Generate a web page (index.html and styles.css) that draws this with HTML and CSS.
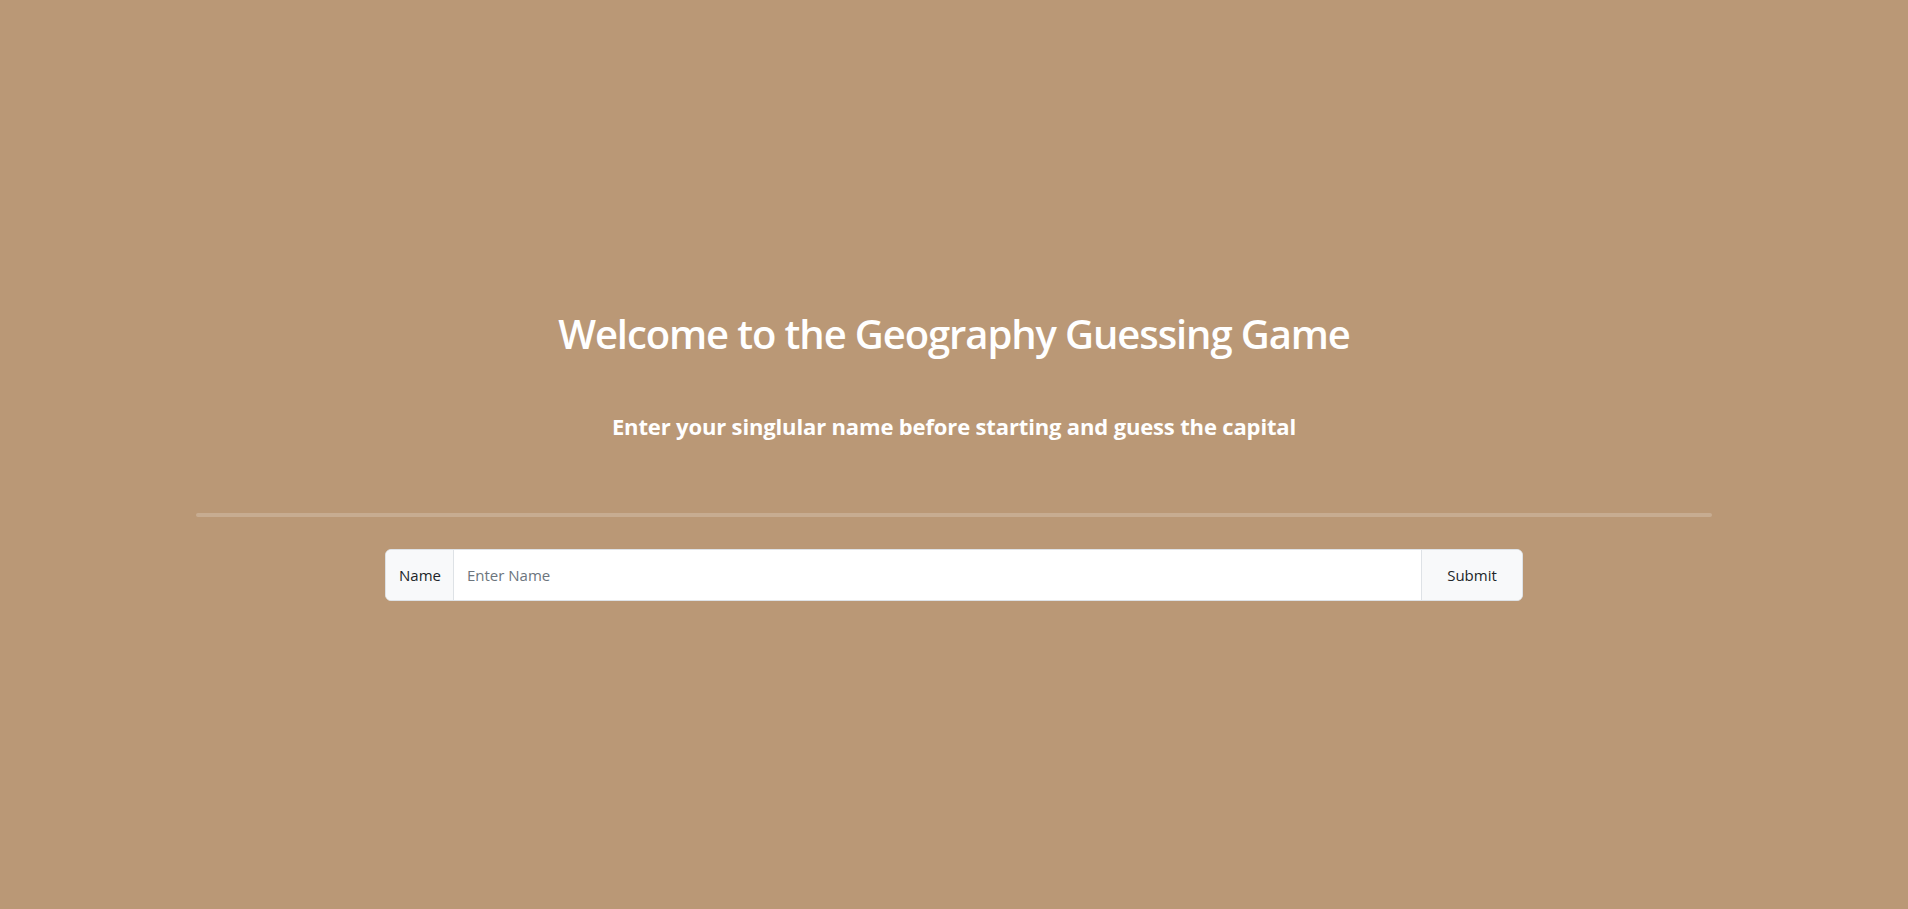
FILE: index.html
```html
<!DOCTYPE html>
<html lang="en">
<head>
<meta charset="utf-8">
<title>Geography Guessing Game</title>
<link rel="stylesheet" href="styles.css">
</head>
<body>
<main class="page">
  <h1 class="title">Welcome to the Geography Guessing Game</h1>
  <h4 class="subtitle">Enter your singlular name before starting and guess the capital</h4>
  <hr class="divider">
  <form class="name-group" onsubmit="return false;">
    <span class="addon">Name</span>
    <input class="name-input" type="text" placeholder="Enter Name">
    <button class="submit-btn" type="submit">Submit</button>
  </form>
</main>
</body>
</html>
```
FILE: styles.css
```css
* { box-sizing: border-box; }
html, body { margin: 0; padding: 0; }
body {
  background: #ba9876;
  font-family: "Open Sans", "Noto Sans", sans-serif;
  color: #212529;
}
.page {
  min-height: 100vh;
  padding-top: 2px;
  display: flex;
  flex-direction: column;
  align-items: center;
  justify-content: center;
}
.title {
  margin: 0;
  font-size: 40px;
  line-height: 48px;
  font-weight: 600;
  color: #fff;
  letter-spacing: -1.1px;
}
.subtitle {
  margin: 55px 0 0;
  font-size: 22px;
  line-height: 26px;
  font-weight: 700;
  color: #fff;
  letter-spacing: -0.15px;
}
.divider {
  margin: 74px 0 0;
  width: 1516px;
  height: 4px;
  border: 0;
  border-radius: 2px;
  background: rgba(255, 255, 255, 0.2);
}
.name-group {
  margin-top: 32px;
  width: 1138px;
  height: 52px;
  display: flex;
  align-items: stretch;
  background: #fff;
  border: 1px solid #dee2e6;
  border-radius: 6px;
  overflow: hidden;
}
.addon {
  display: flex;
  align-items: center;
  padding: 0 12px 0 13px;
  background: #f8f9fa;
  border-right: 1px solid #dee2e6;
  font-size: 15px;
  color: #212529;
}
.name-input {
  flex: 1;
  border: 0;
  outline: none;
  padding: 0 13px;
  font-family: inherit;
  font-size: 15px;
  color: #212529;
  background: #fff;
}
.name-input::placeholder { color: #6c757d; }
.submit-btn {
  width: 101px;
  border: 0;
  border-left: 1px solid #dee2e6;
  background: #f8f9fa;
  font-family: inherit;
  font-size: 15px;
  color: #212529;
  padding: 0;
}
```
